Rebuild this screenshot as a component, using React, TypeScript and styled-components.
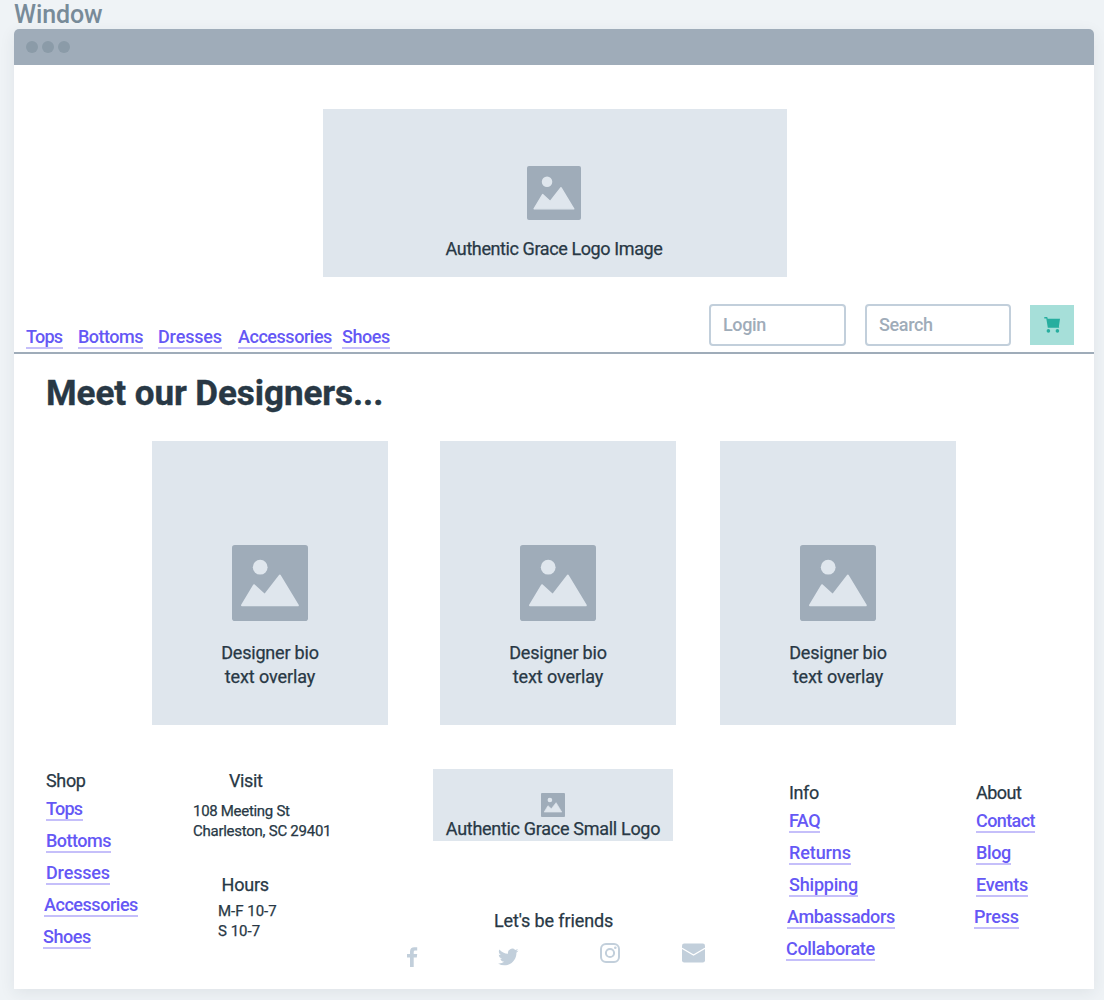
import React from "react";
import styled, { createGlobalStyle } from "styled-components";

const GlobalStyle = createGlobalStyle`
  *, *::before, *::after { box-sizing: border-box; }
  body {
    margin: 0;
    height: 1000px;
    overflow: hidden;
    background: #eff3f6;
    color: #283845;
    font-family: Roboto, "Noto Sans", sans-serif;
    font-size: 18px;
    line-height: 24px;
  }
`;

const Page = styled.main`
  display: flex;
  flex-direction: column;
  height: 1000px;
  padding: 0 10px 11px 14px;
`;

const WindowLabel = styled.div`
  height: 29px;
  line-height: 29px;
  font-size: 25px;
  font-weight: 500;
  letter-spacing: -0.1px;
  color: #788b99;
`;

const Frame = styled.section`
  flex: 1;
  display: flex;
  flex-direction: column;
  background: #fff;
  border-radius: 5px 5px 0 0;
  box-shadow: 0 4px 16px rgba(40, 56, 69, 0.08);
`;

const TitleBar = styled.div`
  display: flex;
  align-items: center;
  gap: 4px;
  height: 36px;
  padding-left: 12px;
  border-radius: 5px 5px 0 0;
  background: #9facb9;
`;

const Dot = styled.span`
  width: 12px;
  height: 12px;
  border-radius: 50%;
  background: #8b9ba8;
`;

const Text = styled.div<{ $track?: number; $indent?: number; $mt?: number }>`
  margin-top: ${(p) => p.$mt ?? 0}px;
  padding-left: ${(p) => p.$indent ?? 0}px;
  font-weight: 400;
  -webkit-text-stroke: 0.25px currentColor;
  white-space: nowrap;
  letter-spacing: ${(p) => p.$track ?? 0}px;
`;

const SmallText = styled(Text)`
  font-size: 15px;
  line-height: 20px;
`;

const Placeholder = styled.div<{ $w: number; $h: number; $pad: number; $gap: number; $right?: number }>`
  display: flex;
  flex-direction: column;
  align-items: center;
  width: ${(p) => p.$w}px;
  height: ${(p) => p.$h}px;
  padding: ${(p) => p.$pad}px ${(p) => p.$right ?? 0}px 0 0;
  background: #dfe6ed;

  svg {
    flex: none;
    margin-bottom: ${(p) => p.$gap}px;
  }
`;

const Hero = styled.div`
  padding: 44px 0 0 309px;
`;

const NavBar = styled.nav`
  display: flex;
  justify-content: space-between;
  height: 77px;
  padding: 27px 20px 0 12px;
  border-bottom: 2px solid #9facb9;
`;

const NavLinks = styled.div`
  display: flex;
  align-self: flex-start;
  padding-top: 21px;
`;

const Link = styled.a<{ $w: number; $track: number; $shift?: number }>`
  display: block;
  flex: none;
  width: ${(p) => p.$w}px;
  height: 24px;
  margin-left: ${(p) => p.$shift ?? 0}px;
  border-bottom: 2px solid #c5bffa;
  color: #6558f5;
  font-weight: 500;
  letter-spacing: ${(p) => p.$track}px;
  white-space: nowrap;
  cursor: pointer;
`;

const Tools = styled.div`
  display: flex;
  align-items: flex-start;
`;

const Field = styled.input<{ $w: number; $gap: number }>`
  width: ${(p) => p.$w}px;
  height: 42px;
  margin-right: ${(p) => p.$gap}px;
  padding: 0 12px 1px;
  border: 2px solid #c2cfdb;
  border-radius: 4px;
  background: #fff;
  font: 500 18px/24px Roboto, sans-serif;
  letter-spacing: -0.35px;

  &::placeholder {
    color: #9facb9;
    opacity: 1;
  }
`;

const CartButton = styled.button`
  display: flex;
  align-items: center;
  justify-content: center;
  width: 44px;
  height: 40px;
  margin-top: 1px;
  padding: 0;
  border: 0;
  background: #a6dfd9;
`;

const Heading = styled.h1`
  margin: 18px 0 0 32px;
  height: 43px;
  line-height: 44px;
  font-size: 35px;
  font-weight: 700;
  letter-spacing: -0.06px;
  -webkit-text-stroke: 0.4px currentColor;
`;

const Cards = styled.div`
  display: flex;
  padding: 26px 0 0 138px;

  > :nth-child(1) { margin-right: 52px; }
  > :nth-child(2) { margin-right: 44px; }
`;

const Footer = styled.footer`
  display: grid;
  grid-template-columns: 150px 213px 384px 187px 1fr;
  padding: 44px 0 0 28px;
`;

const Column = styled.div<{ $top?: number; $left?: number }>`
  padding: ${(p) => p.$top ?? 0}px 0 0 ${(p) => p.$left ?? 0}px;
`;

const LinkList = styled.div`
  display: flex;
  flex-direction: column;
  gap: 8px;
  margin-top: 4px;
`;

const SmallLogo = styled.div`
  padding-left: 28px;
`;

const Socials = styled.div`
  display: flex;
  align-items: flex-start;
  padding-top: 10px;
`;

const Social = styled.svg<{ $ml: number; $mt?: number }>`
  flex: none;
  margin: ${(p) => p.$mt ?? 0}px 0 0 ${(p) => p.$ml}px;
  fill: #c2cfdb;
`;

function ImageIcon({ size }: { size: number }) {
  return (
    <svg width={size} height={size} viewBox="0 0 76 76">
      <rect width="76" height="76" rx="2.8" fill="#9facb9" />
      <g fill="#dfe6ed" stroke="#dfe6ed" strokeLinejoin="round">
        <circle cx="28.2" cy="22.2" r="7.4" stroke="none" />
        <path strokeWidth="2" d="M10 60.3 22 40.2 32.7 50 47.8 30.6 65.8 60.3Z" />
      </g>
    </svg>
  );
}

type LinkItem = [label: string, width: number, tracking: number, shift?: number];

const navLinks: LinkItem[] = [
  ["Tops", 37, -0.75],
  ["Bottoms", 65, -0.5, 15],
  ["Dresses", 64, -0.15, 15],
  ["Accessories", 94, -0.46, 16],
  ["Shoes", 48, -0.42, 10],
];

const shopLinks: LinkItem[] = [
  ["Tops", 37, -0.75],
  ["Bottoms", 65, -0.5],
  ["Dresses", 64, -0.15],
  ["Accessories", 94, -0.46, -2],
  ["Shoes", 48, -0.42, -3],
];

const infoLinks: LinkItem[] = [
  ["FAQ", 31, -0.5],
  ["Returns", 62, -0.1],
  ["Shipping", 69, -0.2],
  ["Ambassadors", 108, -0.32, -2],
  ["Collaborate", 89, -0.34, -3],
];

const aboutLinks: LinkItem[] = [
  ["Contact", 59, -0.6],
  ["Blog", 35, -0.35],
  ["Events", 52, -0.3],
  ["Press", 45, -0.2, -2],
];

function Links({ items }: { items: LinkItem[] }) {
  return (
    <>
      {items.map(([label, width, tracking, shift]) => (
        <Link key={label} $w={width} $track={tracking} $shift={shift}>
          {label}
        </Link>
      ))}
    </>
  );
}

export default function App() {
  return (
    <>
      <GlobalStyle />
      <Page>
        <WindowLabel>Window</WindowLabel>
        <Frame>
          <TitleBar>
            <Dot />
            <Dot />
            <Dot />
          </TitleBar>

          <Hero>
            <Placeholder $w={464} $h={168} $pad={57} $gap={17} $right={2}>
              <ImageIcon size={54} />
              <Text $track={-0.4}>Authentic Grace Logo Image</Text>
            </Placeholder>
          </Hero>

          <NavBar>
            <NavLinks>
              <Links items={navLinks} />
            </NavLinks>
            <Tools>
              <Field $w={137} $gap={19} placeholder="Login" />
              <Field $w={146} $gap={19} placeholder="Search" />
              <CartButton aria-label="Cart">
                <svg width="16" height="16" viewBox="0 0 16 16" fill="#27ae9f">
                  <path d="M.3 0h2.9l.5 1.7H16l-1.100 7.700.3 1.400H3.800L2.300 1.400H.3Z" />
                  <circle cx="4.4" cy="13.9" r="1.8" />
                  <circle cx="13.4" cy="13.9" r="1.8" />
                </svg>
              </CartButton>
            </Tools>
          </NavBar>

          <Heading>Meet our Designers...</Heading>

          <Cards>
            {[0, 1, 2].map((card) => (
              <Placeholder key={card} $w={236} $h={284} $pad={104} $gap={20}>
                <ImageIcon size={76} />
                <Text $track={-0.2}>Designer bio</Text>
                <Text $track={-0.1}>text overlay</Text>
              </Placeholder>
            ))}
          </Cards>

          <Footer>
            <Column $left={4}>
              <Text $track={-0.35}>Shop</Text>
              <LinkList>
                <Links items={shopLinks} />
              </LinkList>
            </Column>

            <Column>
              <Text $track={-0.4} $indent={37}>Visit</Text>
              <SmallText $mt={8} $track={-0.3} $indent={1}>108 Meeting St</SmallText>
              <SmallText $track={-0.26} $indent={1}>Charleston, SC 29401</SmallText>
              <Text $mt={32} $track={-0.2} $indent={29.5}>Hours</Text>
              <SmallText $mt={4} $indent={26}>M-F 10-7</SmallText>
              <SmallText $indent={26}>S 10-7</SmallText>
            </Column>

            <Column>
              <SmallLogo>
                <Placeholder $w={240} $h={72} $pad={24} $gap={0}>
                  <ImageIcon size={24} />
                  <Text $track={-0.3}>Authentic Grace Small Logo</Text>
                </Placeholder>
              </SmallLogo>
              <Text $mt={68} $track={-0.12} $indent={89}>Let's be friends</Text>
              <Socials>
                <Social $ml={1.5} $mt={4} width="11" height="20" viewBox="0 0 11 20">
                  <path d="M3 20v-9.5H0V7h3V4.8C3 1.700 4.600.3 7.400.3h2.800v3.200H8.400C7.100 3.500 6.700 4.100 6.700 5v2h3.500l-.4 3.500H6.700V20Z" />
                </Social>
                <Social $ml={80.5} $mt={5} width="20.5" height="17.5" viewBox="0 1.5 24 20.5">
                  <path d="M23.950 4.570a10 10 0 0 1-2.820.770 4.960 4.960 0 0 0 2.160-2.720c-.950.560-2 .960-3.130 1.190a4.920 4.920 0 0 0-8.380 4.480C7.690 8.090 4.070 6.130 1.640 3.160a4.820 4.820 0 0 0-.670 2.480c0 1.700.870 3.210 2.190 4.100a4.900 4.900 0 0 1-2.230-.620v.060a4.920 4.920 0 0 0 3.950 4.830 5 5 0 0 1-2.210.080 4.940 4.940 0 0 0 4.600 3.420A9.870 9.870 0 0 1 0 19.540a13.990 13.990 0 0 0 7.560 2.210c9.050 0 14-7.500 14-13.980 0-.210 0-.420-.020-.630a9.940 9.940 0 0 0 2.410-2.570Z" />
                </Social>
                <Social $ml={81.5} width="20" height="20" viewBox="0 0 20 20">
                  <g fill="none" stroke="#c2cfdb" strokeWidth="2">
                    <rect x="1" y="1" width="18" height="18" rx="5" />
                    <circle cx="10" cy="10" r="4.1" />
                  </g>
                  <circle cx="15.3" cy="4.7" r="1.3" />
                </Social>
                <Social $ml={62} width="23" height="20" viewBox="0 0 23 20">
                  <rect y=".5" width="23" height="19" rx="2.2" />
                  <path d="M0 5.300 11.500 12 23 5.300" fill="none" stroke="#fff" strokeWidth="1.3" />
                </Social>
              </Socials>
            </Column>

            <Column $top={12}>
              <Text $track={-0.4}>Info</Text>
              <LinkList>
                <Links items={infoLinks} />
              </LinkList>
            </Column>

            <Column $top={12}>
              <Text $track={-0.5}>About</Text>
              <LinkList>
                <Links items={aboutLinks} />
              </LinkList>
            </Column>
          </Footer>
        </Frame>
      </Page>
    </>
  );
}
